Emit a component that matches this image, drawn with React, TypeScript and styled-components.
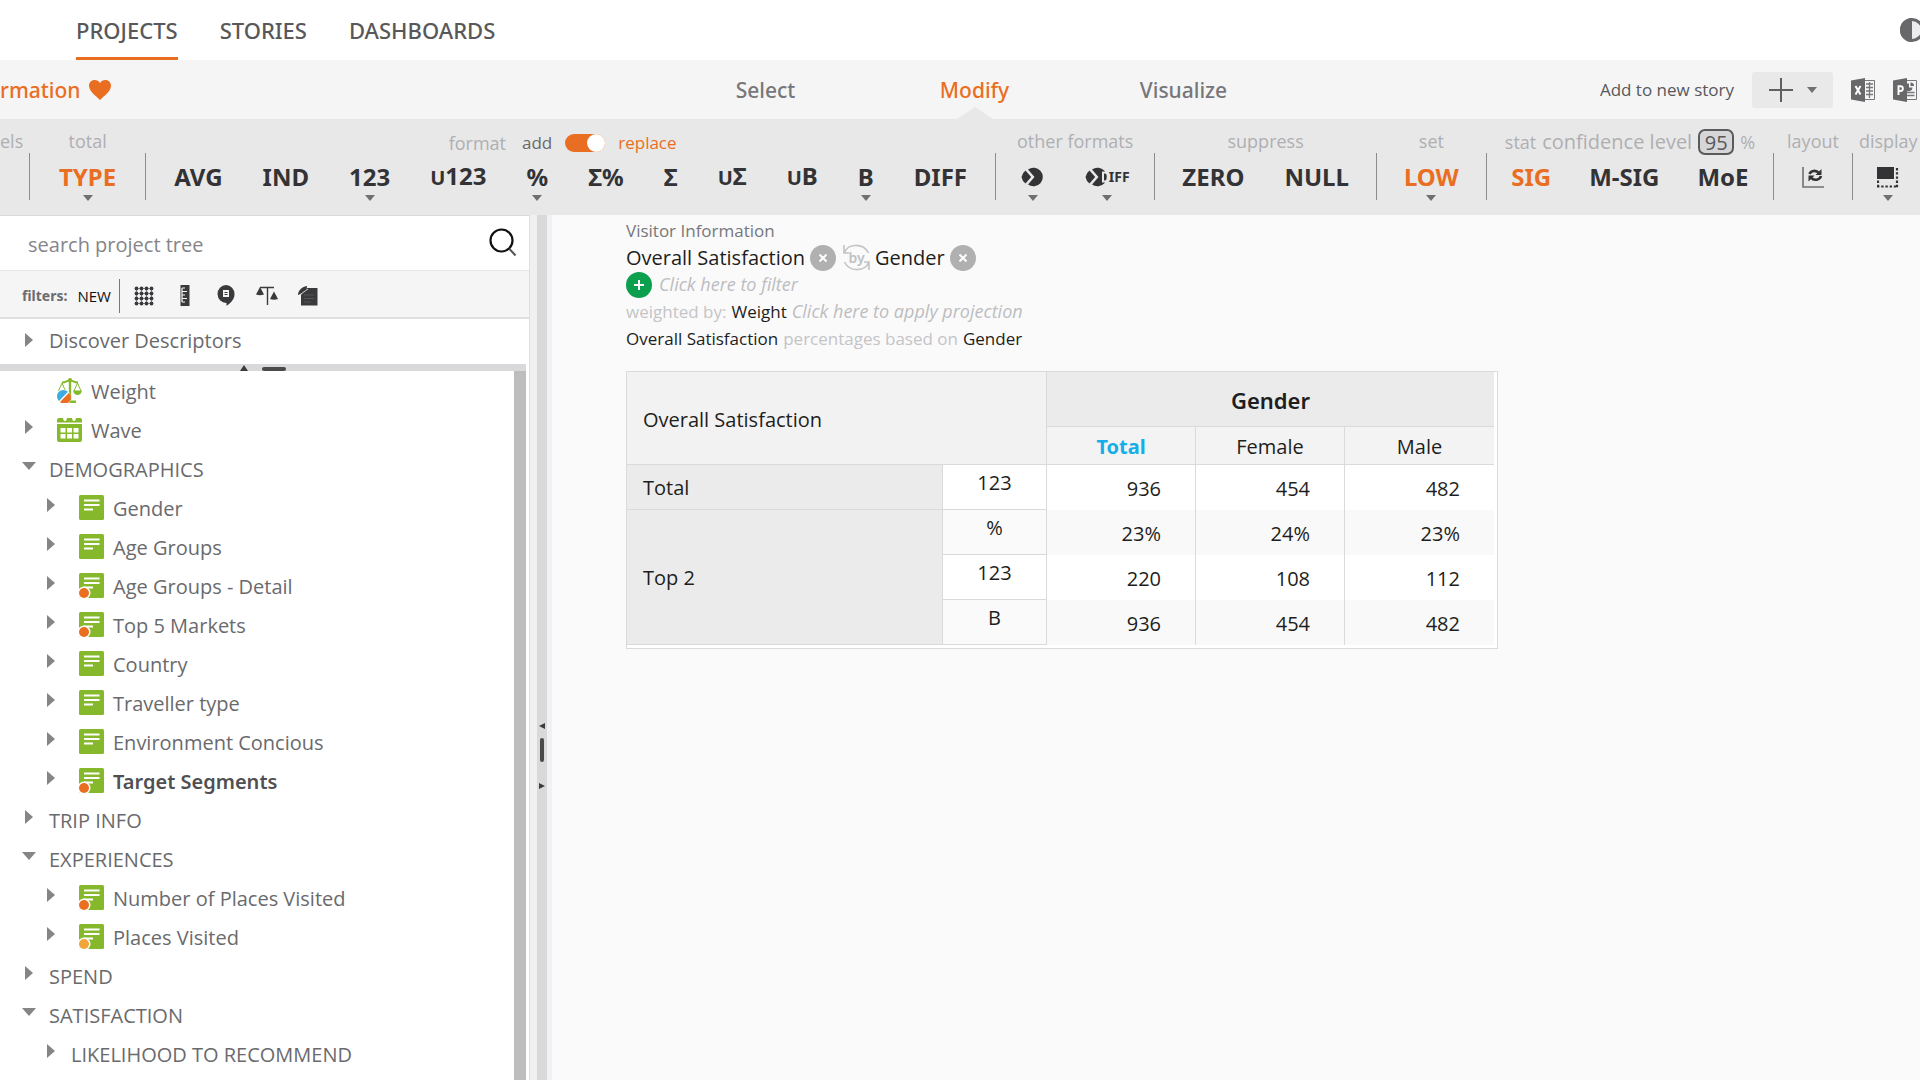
import React from 'react';
import styled, { createGlobalStyle, css } from 'styled-components';

const ORANGE = '#ea6e22';
const GREEN = '#86b82b';
const UI = `'Open Sans', 'Noto Sans', sans-serif`;
const STRONG = `'Noto Sans', 'Open Sans', sans-serif`;

const GlobalStyle = createGlobalStyle`
  *, *::before, *::after { box-sizing: border-box; }
  body { margin: 0; background: #fafafb; font-family: ${UI}; color: #222; }
  button, input { font: inherit; color: inherit; margin: 0; }
  button { border: 0; padding: 0; background: none; cursor: pointer; }
  a { color: inherit; text-decoration: none; }
  svg { display: block; flex: none; }
`;

const Page = styled.div`
  display: flex;
  flex-direction: column;
  height: 100vh;
  overflow: hidden;
`;

/* ---------- top navigation ---------- */

const TopBar = styled.header`
  display: flex;
  flex: none;
  justify-content: space-between;
  align-items: center;
  height: 60px;
  padding-left: 76px;
  background: #fff;
  overflow: hidden;
`;

const TopNav = styled.nav`
  display: flex;
  gap: 42px;
  height: 100%;
`;

const TopLink = styled.a<{ $active?: boolean }>`
  display: flex;
  align-items: center;
  padding-top: 3px;
  border-bottom: 3px solid ${(p) => (p.$active ? ORANGE : 'transparent')};
  font: 500 22px/28px ${STRONG};
  color: #58585a;
`;

const ThemeButton = styled.button`
  width: 20px;
  overflow: hidden;
`;

/* ---------- step bar ---------- */

const StepBar = styled.div`
  display: grid;
  flex: none;
  grid-template-columns: calc(50% - 299px) 627px 1fr;
  align-items: center;
  height: 59px;
  background: #f5f5f6;
`;

const Crumb = styled.a`
  display: flex;
  align-items: center;
  gap: 8px;
  font: 500 21px/28px ${STRONG};
  color: ${ORANGE};
`;

const Steps = styled.nav`
  display: grid;
  grid-template-columns: repeat(3, 1fr);
  height: 59px;
`;

const Step = styled.a<{ $active?: boolean }>`
  position: relative;
  display: flex;
  align-items: center;
  justify-content: center;
  font: 500 21px/28px ${STRONG};
  color: ${(p) => (p.$active ? ORANGE : '#77777a')};
  ${(p) =>
    p.$active &&
    css`
      &::after {
        content: '';
        position: absolute;
        bottom: 0;
        border: 18px solid transparent;
        border-top: 0;
        border-bottom: 12px solid #e8e8e9;
      }
    `}
`;

const StoryTools = styled.div`
  display: flex;
  align-items: center;
  justify-content: flex-end;
  gap: 18px;
  padding-right: 3px;
  font-size: 17px;
  line-height: 24px;
  color: #58585a;
`;

const AddButton = styled.button`
  display: flex;
  align-items: center;
  justify-content: center;
  gap: 14px;
  width: 81px;
  height: 36px;
  border-radius: 3px;
  background: #e9e9ea;
`;

const Caret = styled.span`
  border: 5px solid transparent;
  border-top: 6px solid #707072;
  border-bottom: 0;
`;

/* ---------- toolbar ---------- */

const Toolbar = styled.div`
  display: flex;
  flex: none;
  height: 96px;
  background: #e8e8e9;
  overflow: hidden;
`;

const Group = styled.section<{ $pad?: number }>`
  display: flex;
  flex: none;
  flex-direction: column;
  align-items: center;
  gap: 8px;
  padding: 8px ${(p) => p.$pad ?? 28}px 0;
`;

const CutGroup = styled(Group)`
  width: 29px;
  padding: 8px 0 0;
  align-items: flex-start;
`;

const Separator = styled.i`
  flex: none;
  align-self: flex-end;
  width: 1px;
  height: 47px;
  margin-bottom: 15px;
  background: #8c8c8e;
`;

const GroupLabel = styled.div`
  display: flex;
  align-items: center;
  height: 28px;
  font-size: 18px;
  line-height: 28px;
  white-space: nowrap;
  color: #afafb1;
`;

const FormatLabel = styled(GroupLabel)`
  gap: 13px;
  padding: 4px 16px 0 0;
`;

const Choice = styled.span<{ $on?: boolean }>`
  font-size: 17px;
  color: ${(p) => (p.$on ? ORANGE : '#68686a')};
`;

const Switch = styled.input`
  appearance: none;
  display: flex;
  justify-content: flex-end;
  width: 40px;
  height: 18px;
  border-radius: 9px;
  background: ${ORANGE};
  cursor: pointer;
  &::after {
    content: '';
    width: 18px;
    height: 18px;
    border-radius: 9px;
    background: #fff;
  }
`;

const FormatTitle = styled.span`
  padding-right: 3px;
`;

const LevelLabel = styled(GroupLabel)`
  gap: 6px;
  padding-top: 2px;
`;

const LevelText = styled.span`
  font-size: 20px;
`;

const LevelInput = styled.input`
  width: 36px;
  height: 26px;
  padding: 0;
  border: 2px solid #5b5b5d;
  border-radius: 7px;
  background: #d6d6d8;
  font-size: 20px;
  line-height: 22px;
  text-align: center;
  color: #58585a;
`;

const Tools = styled.div<{ $gap?: number }>`
  display: flex;
  align-items: flex-start;
  gap: ${(p) => p.$gap ?? 40}px;
`;

const ToolButton = styled.button<{ $active?: boolean }>`
  display: flex;
  flex-direction: column;
  align-items: center;
  gap: 4px;
  font: 700 24px/28px ${STRONG};
  color: ${(p) => (p.$active ? ORANGE : '#333335')};
`;

const ToolFace = styled.span`
  display: flex;
  align-items: center;
  height: 28px;
`;

const ToolText = styled.span`
  white-space: nowrap;
`;

const SmallCap = styled.span`
  font-size: 20px;
  text-transform: uppercase;
`;

const TinyText = styled.span`
  font-size: 14px;
  line-height: 28px;
`;

/* ---------- body ---------- */

const Body = styled.div`
  display: flex;
  flex: 1;
  min-height: 0;
`;

const Sidebar = styled.aside`
  display: flex;
  flex: none;
  flex-direction: column;
  width: 530px;
  border-top: 1px solid #d9d9dc;
  border-right: 1px solid #dedee3;
  background: #fff;
`;

const SearchBox = styled.div`
  display: flex;
  flex: none;
  align-items: center;
  height: 54px;
  padding: 2px 12px 0 28px;
`;

const SearchInput = styled.input`
  flex: 1;
  min-width: 0;
  padding: 2px 0 0;
  border: 0;
  outline: 0;
  background: none;
  font-size: 20px;
  line-height: 28px;
  &::placeholder { color: #858588; opacity: 1; }
`;

const SearchButton = styled.button`
  padding-bottom: 4px;
`;

const Filters = styled.div`
  display: flex;
  flex: none;
  align-items: center;
  height: 49px;
  padding: 3px 0 0 22px;
  border-top: 1px solid #e6e6e9;
  border-bottom: 2px solid #e0e0e3;
  background: #f5f5f6;
`;

const FiltersTitle = styled.span`
  margin-right: 10px;
  font: 700 14px/20px ${STRONG};
  color: #6c6c6e;
`;

const NewFilter = styled.button`
  margin-right: 8px;
  font-size: 15px;
  line-height: 20px;
  color: #111;
`;

const FilterList = styled.div`
  display: grid;
  grid-template-columns: repeat(5, 41px);
  justify-items: center;
  align-items: center;
  height: 34px;
  padding-left: 4px;
  border-left: 1px solid #77777a;
`;

const Pane = styled.div`
  flex: none;
  padding: 2px 0 4px;
`;

const PaneHandle = styled.div`
  display: flex;
  flex: none;
  align-items: flex-end;
  justify-content: center;
  gap: 14px;
  height: 7px;
  margin-right: 3px;
  background: #d9d9dc;
`;

const UpMark = styled.i`
  border: 4px solid transparent;
  border-top: 0;
  border-bottom: 6px solid #3c3c3e;
`;

const BarMark = styled.i<{ $upright?: boolean }>`
  width: ${(p) => (p.$upright ? 4 : 24)}px;
  height: ${(p) => (p.$upright ? 24 : 4)}px;
  border-radius: 2px;
  background: #4a4a4c;
`;

const TreePane = styled.div`
  display: flex;
  flex: 1;
  min-height: 0;
  padding-right: 3px;
`;

const Tree = styled.ul`
  flex: 1;
  margin: 0;
  padding: 1px 0 0;
  list-style: none;
  overflow: hidden;
`;

const ScrollBar = styled.div`
  width: 12px;
  background: #bdbdbe;
`;

const Row = styled.li<{ $level: number }>`
  display: flex;
  align-items: center;
  height: 39px;
  padding-left: ${(p) => 22 + p.$level * 22}px;
  list-style: none;
`;

const Toggle = styled.button<{ $raised?: boolean }>`
  display: flex;
  align-items: flex-start;
  justify-content: center;
  width: 14px;
  height: 24px;
  margin-right: 13px;
  padding-top: ${(p) => (p.$raised ? 1 : 4)}px;
`;

const Closed = styled.i`
  border: 7px solid transparent;
  border-left: 8px solid #858587;
  border-right: 0;
`;

const Opened = styled.i`
  margin-top: 3px;
  border: 7px solid transparent;
  border-top: 8px solid #858587;
  border-bottom: 0;
`;

const NodeIcon = styled.span`
  margin: 0 9px 3px 8px;
`;

const NodeLink = styled.a<{ $strong?: boolean }>`
  font-size: 20px;
  line-height: 28px;
  color: #6a6a6d;
  ${(p) =>
    p.$strong &&
    css`
      font-family: ${STRONG};
      font-weight: 600;
      color: #505052;
    `}
`;

const Splitter = styled.div`
  display: flex;
  flex: none;
  flex-direction: column;
  align-items: center;
  gap: 9px;
  width: 22px;
  padding-top: 508px;
  border: solid;
  border-width: 0 5px 0 7px;
  border-color: transparent #f1f1f4 transparent #f0f0f1;
  background: #d9d9dc;
`;

const SideMark = styled.i<{ $right?: boolean }>`
  margin-top: ${(p) => (p.$right ? 12 : 0)}px;
  border: 3px solid transparent;
  ${(p) => (p.$right ? 'border-right: 0; border-left: 6px solid #3c3c3e;' : 'border-left: 0; border-right: 6px solid #3c3c3e;')}
`;

/* ---------- report ---------- */

const Report = styled.main`
  flex: 1;
  min-width: 0;
  padding: 2px 20px 0 74px;
`;

const Query = styled.div`
  margin-bottom: 19px;
`;

const QueryLine = styled.div<{ $large?: boolean }>`
  display: flex;
  align-items: center;
  gap: 5px;
  height: 27px;
  font-size: ${(p) => (p.$large ? 20 : 17)}px;
  line-height: 27px;
  color: #1e1e20;
`;

const Faint = styled.span`
  color: #c4c4c6;
`;

const Source = styled.span`
  color: #77777a;
`;

const Hint = styled.button`
  font-size: 18px;
  font-style: italic;
  color: #bdbdbf;
`;

const Round = styled.button<{ $add?: boolean }>`
  display: flex;
  align-items: center;
  justify-content: center;
  width: 26px;
  height: 26px;
  margin-right: ${(p) => (p.$add ? 2 : 0)}px;
  border-radius: 13px;
  background: ${(p) => (p.$add ? '#0c9f4d' : '#b0b0b0')};
`;

const DataTable = styled.table`
  width: 872px;
  table-layout: fixed;
  border: 1px solid #dadadd;
  border-collapse: separate;
  border-spacing: 0;
  padding: 0 3px 3px 0;
  background: #fff;
  font-size: 20px;
  line-height: 28px;
  color: #1e1e20;
`;

const line = '1px solid #dadadd';

const Corner = styled.th`
  padding: 4px 16px 0;
  border-right: ${line};
  border-bottom: ${line};
  background: #f2f2f3;
  font-weight: 400;
  text-align: left;
`;

const SpanHead = styled.th`
  height: 55px;
  padding: 2px 0 0;
  border-bottom: ${line};
  background: #ebebec;
  font-family: ${STRONG};
  font-size: 22px;
  font-weight: 600;
`;

const ColHead = styled.th<{ $total?: boolean }>`
  height: 38px;
  padding: 2px 0 0;
  border-bottom: ${line};
  border-right: ${line};
  background: #f3f3f4;
  font-weight: ${(p) => (p.$total ? 700 : 400)};
  color: ${(p) => (p.$total ? '#14aee8' : 'inherit')};
  font-family: ${(p) => (p.$total ? STRONG : UI)};
  &:last-child { border-right: 0; }
`;

const RowHead = styled.th`
  padding: 1px 16px 0;
  border-right: ${line};
  border-bottom: ${line};
  background: #ebebec;
  font-weight: 400;
  text-align: left;
`;

const Measure = styled.td<{ $alt?: boolean }>`
  height: 45px;
  padding: 4px 0 0;
  border-right: ${line};
  border-bottom: ${line};
  background: ${(p) => (p.$alt ? '#fafafb' : '#fff')};
  text-align: center;
  vertical-align: top;
`;

const Value = styled.td<{ $alt?: boolean }>`
  padding: 3px 34px 0 0;
  border-right: ${line};
  background: ${(p) => (p.$alt ? '#f9f9fa' : '#fff')};
  text-align: right;
  &:last-child { border-right: 0; }
`;

/* ---------- drawings ---------- */

const ContrastIcon = () => (
  <svg width="24" height="24" viewBox="0 0 24 24">
    <circle cx="12" cy="12" r="10.5" fill="#ececee" stroke="#68686a" strokeWidth="3" />
    <path d="M12 0a12 12 0 0 0 0 24z" fill="#68686a" />
  </svg>
);

const HeartIcon = () => (
  <svg width="22" height="20" viewBox="0 0 22 20">
    <path d="M11 20C7 16 0 11.500 0 5.800 0 2.400 2.500 0 5.700 0 8 0 10 1.200 11 3.200 12 1.200 14 0 16.300 0 19.500 0 22 2.400 22 5.800 22 11.500 15 16 11 20z" fill={ORANGE} />
  </svg>
);

const PlusIcon = () => (
  <svg width="24" height="24" viewBox="0 0 24 24" stroke="#606062" strokeWidth="2">
    <path d="M12 0v24M0 12h24" />
  </svg>
);

const ExcelIcon = () => (
  <svg width="24" height="24" viewBox="0 0 24 24">
    <path d="M13 2.500h10.500v19H13" fill="#f5f5f6" stroke="#77777a" />
    <path d="M15 6h7M15 9.500h7M15 13h7M15 16.500h7M18.500 4v16" stroke="#77777a" strokeWidth="1.300" />
    <path d="M0 2.500 14 0v24L0 21.500z" fill="#68686a" />
    <path d="m4.500 8 5 8.500M9.500 8l-5 8.500" stroke="#fff" strokeWidth="2" />
  </svg>
);

const PowerPointIcon = () => (
  <svg width="24" height="24" viewBox="0 0 24 24">
    <path d="M13 2.500h10.500v19H13" fill="#f5f5f6" stroke="#77777a" />
    <path d="M14 14.500h7.500M14 17.500h7.500" stroke="#77777a" strokeWidth="1.500" />
    <path d="M14 5.500a4 4 0 1 0 5.500 4H16V5.500z" fill="#68686a" />
    <path d="M17.500 4.500V8H21a3.500 3.500 0 0 0-3.500-3.500z" fill="#68686a" />
    <path d="M0 2.500 14 0v24L0 21.500z" fill="#68686a" />
    <path d="M5.500 17V8.200h2a2.300 2.300 0 0 1 0 4.800h-2" fill="none" stroke="#fff" strokeWidth="1.900" />
  </svg>
);

const PieShape = () => (
  <>
    <path d="M4.500 3.500 10.200 10l-5.700 6.500A10.500 10.500 0 0 1 0.500 10a10.500 10.500 0 0 1 4-6.500z" />
    <path d="M7 2.500A9.300 9.300 0 1 1 7 17.500L13.500 10z" />
  </>
);

const PieIcon = () => (
  <svg width="24" height="20" viewBox="0 0 24 20" fill="#333335">
    <PieShape />
  </svg>
);

const SmallPieIcon = () => (
  <svg width="24" height="20" viewBox="0 0 24 20" fill="#333335">
    <PieShape />
    <path d="M18 5.500h1.200a4.500 4.500 0 0 1 0 9H18z" fill="none" stroke="#e8e8e9" strokeWidth="2" />
  </svg>
);

const LayoutIcon = () => (
  <svg width="22" height="22" viewBox="0 0 22 22" fill="none" stroke="#333335">
    <path d="M1 1v20h21" stroke="#707072" strokeWidth="1.600" />
    <path d="M7.500 8c1-3.200 6.500-4.500 9.500-1" strokeWidth="2.600" />
    <path d="M19 10c-1 4-7 5.200-10 1.700" strokeWidth="2.600" />
    <path d="M19.500 3v6h-6zM6.500 15.500v-6h6z" fill="#333335" stroke="none" />
  </svg>
);

const DisplayIcon = () => (
  <svg width="22" height="22" viewBox="0 0 22 22">
    <path d="M0 1h17v12H0z" fill="#333335" />
    <path d="M20 2v20M1 14.500V21M0 20.500h20" fill="none" stroke="#333335" strokeWidth="2.200" strokeDasharray="2.400 1.800" />
  </svg>
);

const SearchIcon = () => (
  <svg width="28" height="29" viewBox="0 0 28 29" fill="none">
    <circle cx="12.500" cy="12.500" r="11" stroke="#111" strokeWidth="2.200" />
    <path d="m20.500 21 6 6.500" stroke="#555" strokeWidth="2" />
  </svg>
);

const DotsIcon = () => (
  <svg width="20" height="20" viewBox="0 0 20 20" fill="#3a3a3c">
    {[2.5, 7.5, 12.5, 17.5].map((y) => [2.5, 7.5, 12.5, 17.5].map((x) => <circle key={`${x}-${y}`} cx={x} cy={y} r="1.900" />))}
    <path d="M2.500 2v16M7.500 2v16M12.500 2v16M17.500 2v16M2 2.500h16M2 7.500h16M2 12.500h16M2 17.500h16" stroke="#3a3a3c" strokeWidth=".5" />
  </svg>
);

const RulerIcon = () => (
  <svg width="10" height="21" viewBox="0 0 10 21">
    <path d="M.5 0h9v21h-9z" fill="#3a3a3c" />
    <path d="M2 3h3M2 6.500h5M2 10h3M2 13.500h5M2 17h3M2 3v14" stroke="#f5f5f6" strokeWidth="1.200" />
  </svg>
);

const TalkIcon = () => (
  <svg width="18" height="21" viewBox="0 0 18 21">
    <path d="M9 0a8.500 9 0 0 1 8.500 9.200c0 4.800-3.500 9-8 11.500V18A8.700 9 0 0 1 9 0z" fill="#3a3a3c" />
    <path d="M6 5h6v7H6z" fill="#f5f5f6" />
    <path d="M7.500 7.500h3M7.500 9.500h3" stroke="#3a3a3c" />
  </svg>
);

const ScalesIcon = () => (
  <svg width="22" height="20" viewBox="0 0 22 20">
    <path d="M4 1.500h14M11.500 1v18" fill="none" stroke="#3a3a3c" strokeWidth="1.400" />
    <path d="m0 8.500 4-7.500 4 7.500a5 1.500 0 0 1-8 0zM14 13l4-7.500 4 7.500a5 1.500 0 0 1-8 0z" fill="#3a3a3c" />
  </svg>
);

const NoteIcon = () => (
  <svg width="20" height="20" viewBox="0 0 20 20">
    <path d="M9 2h10.500v17.500H3V9z" fill="#3a3a3c" />
    <path d="M0 9C0 5 3 1 9 0c0 5-3 8-9 9z" fill="#3a3a3c" />
    <path d="m0 10 10-7" stroke="#f5f5f6" strokeWidth=".8" />
    <path d="M6 9h10M6 12.500h10M6 16h7" stroke="#555558" />
  </svg>
);

const WeightIcon = () => (
  <svg width="25" height="25" viewBox="0 0 25 25">
    <g fill="none" stroke={GREEN}>
      <path d="M13 1v21" strokeWidth="2.400" />
      <path d="M5 4.500c4 0 5-2 8-2s4 2 8 2" strokeWidth="2" />
      <path d="m5 5-3.500 8M5 5l3.500 8M20.500 5 17 13M20.500 5 24 13" strokeWidth="1" />
    </g>
    <circle cx="13" cy="2" r="2" fill={GREEN} />
    <path d="M16 12.500h9c-.5 3-2.500 4.500-4.500 4.500S16.500 15.500 16 12.500zM12.500 22.500h6.500v2.500h-6.500z" fill={GREEN} />
    <circle cx="6.500" cy="18.500" r="7" fill="#fff" />
    <path d="M2 23A6.300 6.300 0 0 1 11 13.700z" fill="#3cabe0" />
    <path d="M12 14.700A6.300 6.300 0 0 1 3 24z" fill={ORANGE} />
  </svg>
);

const CalendarIcon = () => (
  <svg width="25" height="25" viewBox="0 0 25 25">
    <path d="M0 3q0-2 2-2h21q2 0 2 2v2.500H0zM0 7h25v16q0 2-2 2H2q-2 0-2-2z" fill={GREEN} />
    <path d="M6 0q0 4 2 4t2-4zM15 0q0 4 2 4t2-4z" fill="#fff" />
    <path d="M3.500 11h5v4.500h-5zM10 11h5v4.500h-5zM16.500 11h5v4.500h-5zM3.500 17h5v4.500h-5zM10 17h5v4.500h-5zM16.500 17h5v4.500h-5z" fill="#fff" />
  </svg>
);

const SheetIcon = ({ dot }: { dot?: string }) => (
  <svg width="25" height="25" viewBox="0 0 25 25">
    <rect width="25" height="25" rx="1.500" fill={GREEN} />
    <path d="M5 5.500h15.500M5 10h15.500M5 14.500h9" stroke="#fff" strokeWidth="1.800" />
    {dot && (
      <>
        <circle cx="5" cy="20" r="6.500" fill="#fff" />
        <circle cx="5" cy="20" r="5" fill={dot} />
      </>
    )}
  </svg>
);

const CrossIcon = () => (
  <svg width="8" height="8" viewBox="0 0 8 8" stroke="#fff" strokeWidth="2">
    <path d="m.5.5 7 7M7.500.5l-7 7" />
  </svg>
);

const AddIcon = () => (
  <svg width="10" height="10" viewBox="0 0 10 10" stroke="#fff" strokeWidth="2">
    <path d="M5 0v10M0 5h10" />
  </svg>
);

const SwapButton = styled.button`
  display: grid;
  place-items: center;
  margin-left: 2px;
  font: 600 14px/24px ${STRONG};
  color: #c0c0c2;
  > * { grid-area: 1 / 1; }
`;

const SwapIcon = () => (
  <svg width="27" height="27" viewBox="0 0 27 27" fill="none" stroke="#c4c4c6" strokeWidth="1.600">
    <path d="M1 1v8h5M1.500 8.500C4 0 20-2 25.500 9" />
    <path d="M26 26v-8h-5M25.500 18.500C23 27 7 29 1.500 18" />
  </svg>
);

/* ---------- data ---------- */

type ToolItem = { name: string; face: React.ReactNode; active?: boolean; menu?: boolean };

const Sub = ({ pre, text }: { pre: string; text: string }) => (
  <ToolText>
    <SmallCap>{pre}</SmallCap>
    {text}
  </ToolText>
);

const text = (t: string, opts: Partial<ToolItem> = {}): ToolItem => ({ name: t, face: <ToolText>{t}</ToolText>, ...opts });

const formatTools: ToolItem[] = [
  text('AVG'),
  text('IND'),
  text('123', { menu: true }),
  { name: 'u123', face: <Sub pre="u" text="123" /> },
  text('%', { menu: true }),
  text('Σ%'),
  text('Σ'),
  { name: 'uΣ', face: <Sub pre="u" text="Σ" /> },
  { name: 'uB', face: <Sub pre="u" text="B" /> },
  text('B', { menu: true }),
  text('DIFF'),
];

const otherTools: ToolItem[] = [
  { name: 'Share', face: <PieIcon />, menu: true },
  { name: 'Share difference', face: (<><SmallPieIcon /><TinyText>IFF</TinyText></>), menu: true },
];

const statTools: ToolItem[] = [text('SIG', { active: true }), text('M-SIG'), text('MoE')];

const ToolRow = ({ items, gap }: { items: ToolItem[]; gap?: number }) => (
  <Tools $gap={gap}>
    {items.map((t) => (
      <ToolButton key={t.name} $active={t.active} aria-label={t.name}>
        <ToolFace>{t.face}</ToolFace>
        {t.menu && <Caret />}
      </ToolButton>
    ))}
  </Tools>
);

type TreeNode = { label: string; level: number; open?: boolean; leaf?: boolean; icon?: React.ReactNode; strong?: boolean };

const nodes: TreeNode[] = [
  { label: 'Weight', level: 0, leaf: true, icon: <WeightIcon /> },
  { label: 'Wave', level: 0, icon: <CalendarIcon /> },
  { label: 'DEMOGRAPHICS', level: 0, open: true },
  { label: 'Gender', level: 1, icon: <SheetIcon /> },
  { label: 'Age Groups', level: 1, icon: <SheetIcon /> },
  { label: 'Age Groups - Detail', level: 1, icon: <SheetIcon dot={ORANGE} /> },
  { label: 'Top 5 Markets', level: 1, icon: <SheetIcon dot={ORANGE} /> },
  { label: 'Country', level: 1, icon: <SheetIcon /> },
  { label: 'Traveller type', level: 1, icon: <SheetIcon /> },
  { label: 'Environment Concious', level: 1, icon: <SheetIcon /> },
  { label: 'Target Segments', level: 1, icon: <SheetIcon dot={ORANGE} />, strong: true },
  { label: 'TRIP INFO', level: 0 },
  { label: 'EXPERIENCES', level: 0, open: true },
  { label: 'Number of Places Visited', level: 1, icon: <SheetIcon dot={ORANGE} /> },
  { label: 'Places Visited', level: 1, icon: <SheetIcon dot="#f0a53a" /> },
  { label: 'SPEND', level: 0 },
  { label: 'SATISFACTION', level: 0, open: true },
  { label: 'LIKELIHOOD TO RECOMMEND', level: 1 },
];

const rows = [
  { head: 'Total', span: 1, measure: '123', values: ['936', '454', '482'] },
  { head: 'Top 2', span: 3, measure: '%', values: ['23%', '24%', '23%'] },
  { measure: '123', values: ['220', '108', '112'] },
  { measure: 'B', values: ['936', '454', '482'] },
];

export default function App() {
  return (
    <Page>
      <GlobalStyle />
      <TopBar>
        <TopNav>
          <TopLink href="#projects" $active>PROJECTS</TopLink>
          <TopLink href="#stories">STORIES</TopLink>
          <TopLink href="#dashboards">DASHBOARDS</TopLink>
        </TopNav>
        <ThemeButton aria-label="Contrast"><ContrastIcon /></ThemeButton>
      </TopBar>

      <StepBar>
        <Crumb href="#information">rmation <HeartIcon /></Crumb>
        <Steps>
          <Step href="#select">Select</Step>
          <Step href="#modify" $active>Modify</Step>
          <Step href="#visualize">Visualize</Step>
        </Steps>
        <StoryTools>
          <span>Add to new story</span>
          <AddButton aria-label="Add to new story"><PlusIcon /><Caret /></AddButton>
          <button aria-label="Export to Excel"><ExcelIcon /></button>
          <button aria-label="Export to PowerPoint"><PowerPointIcon /></button>
        </StoryTools>
      </StepBar>

      <Toolbar>
        <CutGroup><GroupLabel>els</GroupLabel></CutGroup>
        <Separator />
        <Group $pad={29}>
          <GroupLabel>total</GroupLabel>
          <ToolRow items={[text('TYPE', { active: true, menu: true })]} />
        </Group>
        <Separator />
        <Group>
          <FormatLabel>
            <FormatTitle>format</FormatTitle>
            <Choice>add</Choice>
            <Switch type="checkbox" role="switch" defaultChecked aria-label="add or replace" />
            <Choice $on>replace</Choice>
          </FormatLabel>
          <ToolRow items={formatTools} />
        </Group>
        <Separator />
        <Group $pad={21}>
          <GroupLabel>other formats</GroupLabel>
          <ToolRow items={otherTools} />
        </Group>
        <Separator />
        <Group $pad={27}>
          <GroupLabel>suppress</GroupLabel>
          <ToolRow items={[text('ZERO'), text('NULL')]} />
        </Group>
        <Separator />
        <Group $pad={27}>
          <GroupLabel>set</GroupLabel>
          <ToolRow items={[text('LOW', { active: true, menu: true })]} />
        </Group>
        <Separator />
        <Group $pad={18}>
          <LevelLabel as="label">
            <span>stat</span>
            <LevelText>confidence level</LevelText>
            <LevelInput defaultValue="95" />
            <span>%</span>
          </LevelLabel>
          <ToolRow items={statTools} gap={38} />
        </Group>
        <Separator />
        <Group $pad={13}>
          <GroupLabel>layout</GroupLabel>
          <ToolRow items={[{ name: 'Swap layout', face: <LayoutIcon /> }]} />
        </Group>
        <Separator />
        <Group $pad={6}>
          <GroupLabel>display</GroupLabel>
          <ToolRow items={[{ name: 'Display', face: <DisplayIcon />, menu: true }]} />
        </Group>
      </Toolbar>

      <Body>
        <Sidebar>
          <SearchBox>
            <SearchInput placeholder="search project tree" aria-label="search project tree" />
            <SearchButton aria-label="Search"><SearchIcon /></SearchButton>
          </SearchBox>
          <Filters>
            <FiltersTitle>filters:</FiltersTitle>
            <NewFilter>NEW</NewFilter>
            <FilterList>
              <button aria-label="Grid"><DotsIcon /></button>
              <button aria-label="Scale"><RulerIcon /></button>
              <button aria-label="Open-ended"><TalkIcon /></button>
              <button aria-label="Weights"><ScalesIcon /></button>
              <button aria-label="Notes"><NoteIcon /></button>
            </FilterList>
          </Filters>
          <Pane>
            <Row as="div" $level={0}>
              <Toggle aria-label="Expand Discover Descriptors"><Closed /></Toggle>
              <NodeLink href="#descriptors">Discover Descriptors</NodeLink>
            </Row>
          </Pane>
          <PaneHandle><UpMark /><BarMark /></PaneHandle>
          <TreePane>
            <Tree>
              {nodes.map((n) => (
                <Row key={n.label} $level={n.level}>
                  {n.leaf ? (
                    <Toggle as="span" />
                  ) : (
                    <Toggle $raised aria-label={`Toggle ${n.label}`}>{n.open ? <Opened /> : <Closed />}</Toggle>
                  )}
                  {n.icon && <NodeIcon>{n.icon}</NodeIcon>}
                  <NodeLink href="#node" $strong={n.strong}>{n.label}</NodeLink>
                </Row>
              ))}
            </Tree>
            <ScrollBar />
          </TreePane>
        </Sidebar>

        <Splitter>
          <SideMark />
          <BarMark $upright />
          <SideMark $right />
        </Splitter>

        <Report>
          <Query>
            <QueryLine><Source>Visitor Information</Source></QueryLine>
            <QueryLine $large>
              <span>Overall Satisfaction</span>
              <Round aria-label="Remove Overall Satisfaction"><CrossIcon /></Round>
              <SwapButton><SwapIcon /><span>by</span></SwapButton>
              <span>Gender</span>
              <Round aria-label="Remove Gender"><CrossIcon /></Round>
            </QueryLine>
            <QueryLine>
              <Round $add aria-label="Add filter"><AddIcon /></Round>
              <Hint>Click here to filter</Hint>
            </QueryLine>
            <QueryLine>
              <Faint>weighted by:</Faint>
              <span>Weight</span>
              <Hint>Click here to apply projection</Hint>
            </QueryLine>
            <QueryLine>
              <span>Overall Satisfaction</span>
              <Faint>percentages based on</Faint>
              <span>Gender</span>
            </QueryLine>
          </Query>

          <DataTable>
            <colgroup>
              <col width="316" />
              <col width="104" />
              <col width="149" />
              <col width="149" />
              <col />
            </colgroup>
            <thead>
              <tr>
                <Corner colSpan={2} rowSpan={2}>Overall Satisfaction</Corner>
                <SpanHead colSpan={3}>Gender</SpanHead>
              </tr>
              <tr>
                <ColHead $total>Total</ColHead>
                <ColHead>Female</ColHead>
                <ColHead>Male</ColHead>
              </tr>
            </thead>
            <tbody>
              {rows.map((r, i) => (
                <tr key={i}>
                  {r.head && <RowHead rowSpan={r.span}>{r.head}</RowHead>}
                  <Measure $alt={i % 2 === 1}>{r.measure}</Measure>
                  {r.values.map((v, j) => (
                    <Value key={j} $alt={i % 2 === 1}>{v}</Value>
                  ))}
                </tr>
              ))}
            </tbody>
          </DataTable>
        </Report>
      </Body>
    </Page>
  );
}
